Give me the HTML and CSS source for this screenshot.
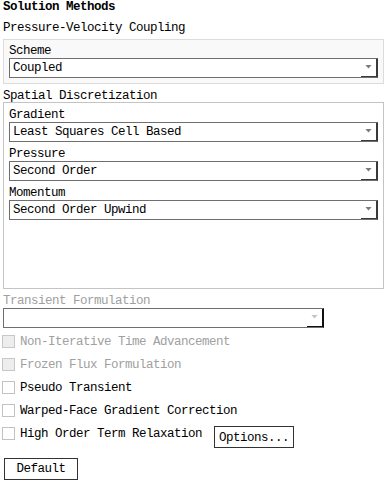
FILE: index.html
```html
<!DOCTYPE html>
<html lang="en">
<head>
  <meta charset="UTF-8" />
  <title>Solution Methods</title>
  <link rel="stylesheet" href="styles.css">
</head>
<body>
  <div class="panel">
    <div class="title">Solution Methods</div>

    <div class="caption first">Pressure-Velocity Coupling</div>
    <div class="group shaded">
      <div class="field-label">Scheme</div>
      <div class="select"><span class="value">Coupled</span><span class="arrow"></span></div>
    </div>

    <div class="caption tight">Spatial Discretization</div>
    <div class="group framed">
      <div class="field">
        <div class="field-label">Gradient</div>
        <div class="select"><span class="value">Least Squares Cell Based</span><span class="arrow"></span></div>
      </div>
      <div class="field">
        <div class="field-label">Pressure</div>
        <div class="select"><span class="value">Second Order</span><span class="arrow"></span></div>
      </div>
      <div class="field">
        <div class="field-label">Momentum</div>
        <div class="select"><span class="value">Second Order Upwind</span><span class="arrow"></span></div>
      </div>
    </div>

    <div class="caption muted">Transient Formulation</div>
    <div class="select short disabled"><span class="value"></span><span class="arrow"></span></div>

    <div class="checks">
      <div class="check disabled"><span class="box"></span><span class="text">Non-Iterative Time Advancement</span></div>
      <div class="check disabled"><span class="box"></span><span class="text">Frozen Flux Formulation</span></div>
      <div class="check"><span class="box"></span><span class="text">Pseudo Transient</span></div>
      <div class="check"><span class="box"></span><span class="text">Warped-Face Gradient Correction</span></div>
      <div class="check last"><span class="box"></span><span class="text">High Order Term Relaxation</span><button class="btn options">Options...</button></div>
    </div>

    <button class="btn default">Default</button>
  </div>
</body>
</html>
```

FILE: styles.css
```css
body {
  margin: 0;
  font-family: "Liberation Mono", "DejaVu Sans Mono", monospace;
  font-size: 12.5px;
  letter-spacing: -0.5px;
  color: #000;
  background: #fff;
}
.panel {
  padding: 0 2px 0 3px;
}
.title {
  font-weight: bold;
  line-height: 14px;
}
.caption {
  line-height: 14px;
}
.caption.first {
  margin-top: 7px;
  margin-bottom: 4px;
}
.caption.tight {
  margin-top: 7px;
  line-height: 11px;
}
.caption.muted {
  margin-top: 5px;
  color: #a0a0a0;
}
.group {
  border: 1px solid #dcdcdc;
  padding: 4px 5px 5px;
}
.group.shaded {
  background: #f9f9f9;
}
.group.framed {
  border-color: #c4c4c4;
  padding-top: 5px;
  height: 187px;
  box-sizing: border-box;
}
.field + .field {
  margin-top: 5px;
}
.field-label {
  line-height: 14px;
}
.select {
  display: flex;
  height: 20px;
  box-sizing: border-box;
  border: 1px solid #6f6f6f;
  border-right-color: #3a3a3a;
  background: #fff;
}
.select .value {
  flex: 1;
  padding: 1px 0 0 3px;
  line-height: 17px;
  white-space: nowrap;
}
.select .arrow {
  width: 16px;
  display: flex;
  align-items: center;
  justify-content: center;
  padding-bottom: 2px;
  box-sizing: border-box;
  border-right: 1px solid #3a3a3a;
  border-bottom: 1px solid #3a3a3a;
}
.select .arrow::after {
  content: "";
  width: 7px;
  height: 4px;
  background: #7a7a7a;
  clip-path: polygon(0 0, 100% 0, 50% 100%);
}
.select.short {
  width: 321px;
}
.select.disabled {
  border-right-color: #111;
}
.select.disabled .arrow {
  border-color: #111;
}
.select.disabled .arrow::after {
  background: #c4c4c4;
}
.checks {
  margin-top: 1px;
}
.check {
  display: flex;
  align-items: flex-start;
  height: 23px;
}
.check.last {
  height: 27px;
}
.check .box {
  width: 13px;
  height: 13px;
  box-sizing: border-box;
  margin: 6px 5px 0 -1px;
  border: 1px solid #c2c2c2;
  background: #fff;
}
.check .text {
  padding-top: 6px;
  line-height: 14px;
  white-space: nowrap;
}
.check.disabled .box {
  background: #ededed;
  border-color: #c8c8c8;
}
.check.disabled .text {
  color: #a0a0a0;
}
.btn {
  font: inherit;
  letter-spacing: inherit;
  color: #000;
  background: #fff;
  border: 1px solid #333;
  border-radius: 0;
  height: 22px;
  padding: 0;
  line-height: 20px;
}
.btn.options {
  width: 80px;
  margin: 5px 0 0 12px;
  padding-top: 1px;
}
.btn.default {
  width: 74px;
  margin: 10px 0 0 1px;
}
```
